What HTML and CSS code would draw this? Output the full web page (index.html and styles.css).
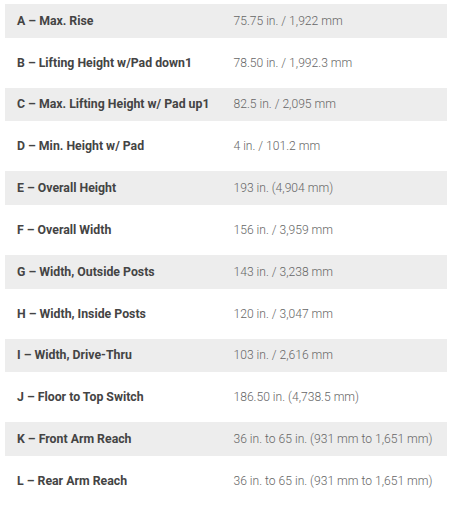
FILE: index.html
```html
<!DOCTYPE html>
<html>
<head>
<meta charset="utf-8">
<link rel="stylesheet" href="styles.css">
</head>
<body>
<table class="specs">
<tbody>
<tr class="shade"><td class="label">A – Max. Rise</td><td class="value">75.75 in. / 1,922 mm</td></tr>
<tr class="plain"><td class="label">B – Lifting Height w/Pad down1</td><td class="value">78.50 in. / 1,992.3 mm</td></tr>
<tr class="shade"><td class="label">C – Max. Lifting Height w/ Pad up1</td><td class="value">82.5 in. / 2,095 mm</td></tr>
<tr class="plain"><td class="label">D – Min. Height w/ Pad</td><td class="value">4 in. / 101.2 mm</td></tr>
<tr class="shade"><td class="label">E – Overall Height</td><td class="value">193 in. (4,904 mm)</td></tr>
<tr class="plain"><td class="label">F – Overall Width</td><td class="value">156 in. / 3,959 mm</td></tr>
<tr class="shade"><td class="label">G – Width, Outside Posts</td><td class="value">143 in. / 3,238 mm</td></tr>
<tr class="plain"><td class="label">H – Width, Inside Posts</td><td class="value">120 in. / 3,047 mm</td></tr>
<tr class="shade"><td class="label">I – Width, Drive-Thru</td><td class="value">103 in. / 2,616 mm</td></tr>
<tr class="plain"><td class="label">J – Floor to Top Switch</td><td class="value">186.50 in. (4,738.5 mm)</td></tr>
<tr class="shade"><td class="label">K – Front Arm Reach</td><td class="value">36 in. to 65 in. (931 mm to 1,651 mm)</td></tr>
<tr class="plain"><td class="label">L – Rear Arm Reach</td><td class="value">36 in. to 65 in. (931 mm to 1,651 mm)</td></tr>
</tbody>
</table>
</body>
</html>
```
FILE: styles.css
```css
html, body {
  margin: 0;
  background: #ffffff;
}
body {
  padding: 4px 3px 0 5px;
  font-family: Roboto, "Noto Sans", sans-serif;
}
.specs {
  border-collapse: collapse;
  width: 442px;
}
.specs td {
  padding: 0 12px;
  vertical-align: middle;
  white-space: nowrap;
}
.shade td {
  background: #ededed;
  height: 33.67px;
}
.plain td {
  height: 50px;
}
.label {
  width: 192px;
  font-size: 12.3px;
  font-weight: 700;
  color: #444444;
}
.value {
  font-size: 12.1px;
  font-weight: 300;
  color: #666666;
  padding-left: 16px;
}
```
